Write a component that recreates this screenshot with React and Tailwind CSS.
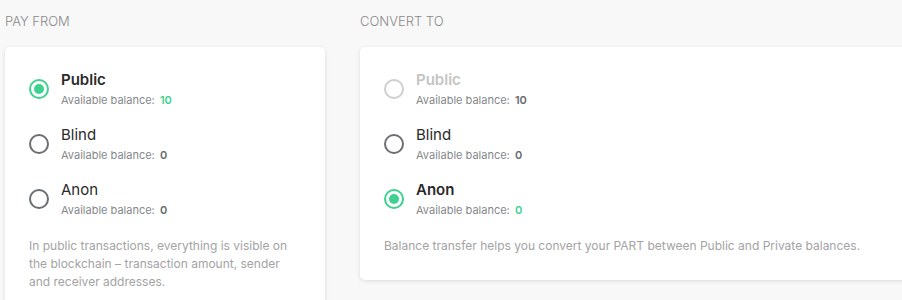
import React from 'react';

const payFrom = [
  { name: 'Public', balance: '10', state: 'checked' },
  { name: 'Blind', balance: '0', state: 'off' },
  { name: 'Anon', balance: '0', state: 'off' },
];

const convertTo = [
  { name: 'Public', balance: '10', state: 'disabled' },
  { name: 'Blind', balance: '0', state: 'off' },
  { name: 'Anon', balance: '0', state: 'checked' },
];

function Radio({ state }) {
  if (state === 'checked') {
    return (
      <span className="flex h-5 w-5 shrink-0 items-center justify-center rounded-full border-2 border-[#3fd18f]">
        <span className="h-[10px] w-[10px] rounded-full bg-[#3fd18f]" />
      </span>
    );
  }
  return (
    <span
      className={`h-5 w-5 shrink-0 rounded-full border-2 ${
        state === 'disabled' ? 'border-[#cfcfcf]' : 'border-[#6b6e72]'
      }`}
    />
  );
}

function Option({ item }) {
  const checked = item.state === 'checked';
  const disabled = item.state === 'disabled';
  return (
    <div className="flex items-center gap-3">
      <Radio state={item.state} />
      <div>
        <div
          className={`text-[15px] leading-5 ${
            disabled ? 'font-semibold text-[#c4c4c4]' : checked ? 'font-semibold text-[#2a2a2a]' : 'text-[#2a2a2a]'
          }`}
        >
          {item.name}
        </div>
        <div className="mt-[2px] text-[11px] leading-4 text-[#85888c]">
          Available balance:{' '}
          <span className={`ml-0.5 font-semibold ${checked ? 'text-[#3fd18f]' : 'text-[#666a6e]'}`}>
            {item.balance}
          </span>
        </div>
      </div>
    </div>
  );
}

function Panel({ title, items, note, width }) {
  return (
    <div className={`flex shrink-0 flex-col ${width}`}>
      <h2 className="h-[47px] shrink-0 pt-[11px] text-[13px] font-light uppercase leading-5 text-[#8a8a8a]">{title}</h2>
      <div className="shrink-0 rounded-[5px] bg-white px-6 pt-[23px] pb-[25px] shadow-[0_1px_4px_rgba(0,0,0,0.12)]">
        <div className="flex flex-col gap-[17px]">
          {items.map((item) => (
            <Option key={item.name} item={item} />
          ))}
        </div>
        <p className="mt-[19px] text-[12px] leading-[18px] text-[#a3a3a3]">{note}</p>
      </div>
    </div>
  );
}

export default function App() {
  return (
    <div
      className="flex h-[300px] w-[902px] gap-[35px] overflow-hidden bg-[#f8f8f8] pl-[5px]"
      style={{ fontFamily: 'Inter, "Noto Sans", sans-serif' }}
    >
      <Panel
        title="Pay from"
        width="w-[320px]"
        items={payFrom}
        note="In public transactions, everything is visible on the blockchain – transaction amount, sender and receiver addresses."
      />
      <Panel
        title="Convert to"
        width="w-[580px]"
        items={convertTo}
        note="Balance transfer helps you convert your PART between Public and Private balances."
      />
    </div>
  );
}
